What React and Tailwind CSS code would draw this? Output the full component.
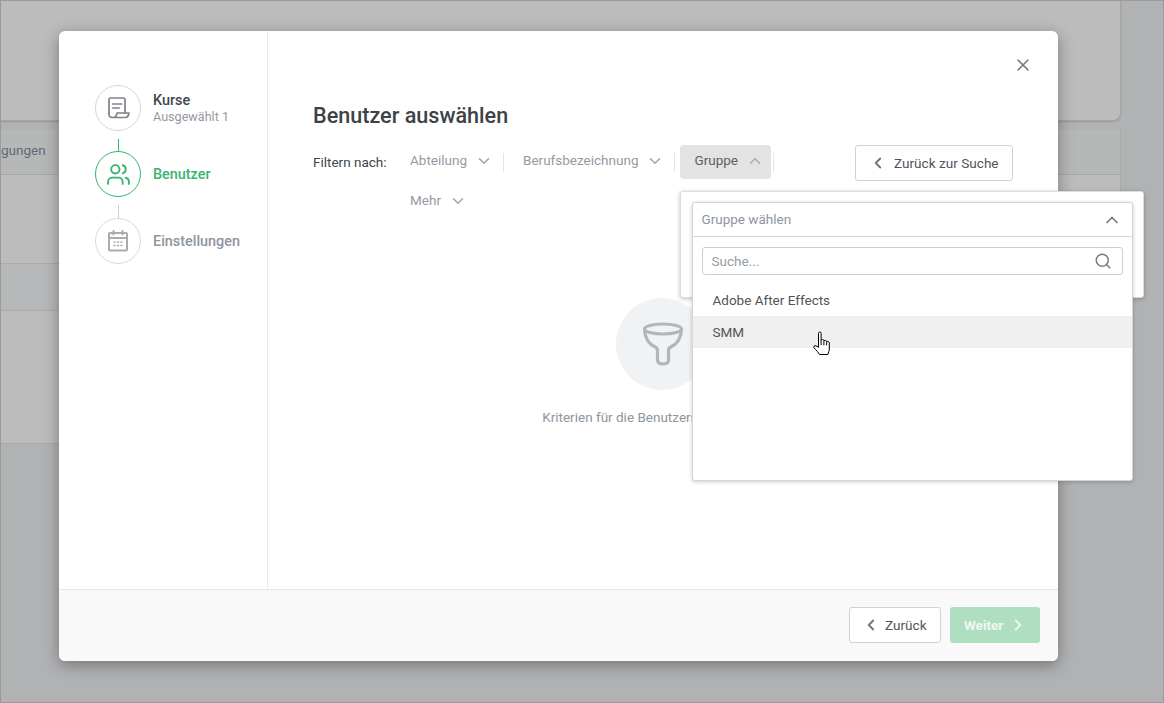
import { ChevronDown, ChevronLeft, ChevronRight, ChevronUp, Search, Users, X } from "lucide-react";

function ScrollIcon() {
  return (
    <svg width="24" height="24" viewBox="0 0 24 24" fill="none" stroke="#7f848b" strokeWidth="1.7" strokeLinejoin="round" strokeLinecap="round">
      <path d="M3 18V3.500A1.500 1.500 0 0 1 4.500 2H17.500A1.500 1.500 0 0 1 19 3.500V17" />
      <path d="M3 18c0 2 1 3.500 3.500 3.500h13c2 0 3-2 3.500-4.500H11c0 2-1.500 4.500-4 4.500" />
      <path d="M6.700 8h9M6.700 12h6.500" />
    </svg>
  );
}

function CalendarIcon() {
  return (
    <svg width="24" height="24" viewBox="0 0 24 24" fill="none" stroke="#a9acaf" strokeWidth="2" strokeLinecap="round">
      <rect x="3" y="4" width="18" height="17.5" rx="1" />
      <path d="M3 9h18M7.500 2v3.500M16.500 2v3.500" />
      <path d="M8 13h1M11.500 13h1M15 13h1M8 16.500h1M11.500 16.500h1M15 16.500h1" strokeWidth="1.600" />
    </svg>
  );
}

function FunnelIcon() {
  return (
    <svg width="42" height="46" viewBox="0 0 42 46" fill="none" stroke="#b3b6b9" strokeWidth="3.200" strokeLinejoin="round">
      <ellipse cx="21" cy="8" rx="18.500" ry="5" />
      <path d="M2.500 8c0 8 4 15 10 17.500 2 1 3 2 3 4V39c0 2.500 1.500 4 5.500 4s5.500-1.500 5.500-4V29.500c0-2 1-3 3-4 6-2.500 10-9.500 10-17.500" />
    </svg>
  );
}

function HandCursor() {
  return (
    <svg width="18" height="24" viewBox="0 0 18 24" fill="#fff" stroke="#000" strokeWidth="1" strokeLinejoin="round">
      <path d="M5.500 2.200c0-1.600 2.600-1.600 2.600 0V9.500c0-1.300 2.800-1.300 2.800 0v.800c0-1.300 2.700-1.300 2.700 0v1c0-1.200 2.700-1 2.700.5V18c0 2-.8 3.200-1.500 5.500H6.500C5.500 21.500 3.500 19.500 1.200 17c-1.200-1.300.2-3 1.800-2.200l2.500 1.500z" />
      <path d="M8.100 9.500v4.500M10.900 10.300v4M13.600 11.300v3" />
    </svg>
  );
}

function Step({ icon, title, sub, circle, titleClass }) {
  return (
    <div className="flex items-center gap-[12px]">
      <div className={`flex h-[46px] w-[46px] shrink-0 items-center justify-center rounded-full border bg-white ${circle}`}>
        {icon}
      </div>
      <div>
        <div className={`pt-px text-[14.4px] leading-[16px] font-medium ${titleClass}`}>{title}</div>
        {sub && <div className="text-[12.6px] leading-[15px] text-[#959aa2]">{sub}</div>}
      </div>
    </div>
  );
}

function Divider() {
  return <div className="mx-[2px] h-[19px] w-px bg-[#e4e4e4]" />;
}

function FilterItem({ label, open, children }) {
  return (
    <div className={`relative flex h-[34px] items-center gap-[8px] rounded pb-[2px] pl-[14px] ${open ? "bg-[#e3e3e3] pr-[7px] text-[#5a6068]" : "pr-[8px] text-[#959aa2]"}`}>
      <span className="text-[13.5px] leading-none">{label}</span>
      {open ? <ChevronUp size={18} color="#a9adb2" /> : <ChevronDown size={18} color="#a0a4aa" />}
      {children}
    </div>
  );
}

function GroupDropdown() {
  return (
    <div className="absolute left-0 top-[46px] z-10 h-[107px] w-[464px] rounded-[3px] border border-[#dcdcdc] bg-white pl-[11px] pt-[10px] shadow-[0_1px_4px_rgba(0,0,0,0.25)]">
      <div className="h-[279px] w-[441px] rounded-[3px] border border-[#d5d5d5] bg-white shadow-[0_1px_4px_rgba(0,0,0,0.2)]">
        <div className="flex h-[34px] items-center justify-between border-b border-[#d5d5d5] pl-[8px] pr-[10px]">
          <span className="text-[13.5px] text-[#8e959e]">Gruppe wählen</span>
          <ChevronUp size={20} color="#6f747a" />
        </div>
        <div className="px-[9px] pt-[10px]">
          <div className="flex h-[28px] items-center justify-between rounded-[3px] border border-[#cfcfcf] pl-[8px] pr-[10px]">
            <span className="text-[13.5px] text-[#979ca3]">Suche...</span>
            <Search size={18} color="#777b81" />
          </div>
        </div>
        <div className="pt-[9px] text-[13.5px] text-[#50555b]">
          <div className="flex h-[32px] items-center pl-[19px]">Adobe After Effects</div>
          <div className="relative flex h-[32px] items-center bg-[#f0f0f0] pl-[19px]">
            SMM
            <div className="absolute left-[120px] top-[15px]">
              <HandCursor />
            </div>
          </div>
        </div>
      </div>
    </div>
  );
}

export default function App() {
  return (
    <div className="relative h-[703px] w-[1164px] overflow-hidden border border-[#9a9a9a] bg-[#b1b2b4] [font-family:Roboto,sans-serif]">
      {/* page behind the overlay */}
      <div className="mr-[42px] flex flex-col gap-[9px]">
        <div className="h-[120px] rounded-br-lg border-r border-b border-[#a5a5a5] bg-[#bcbcbc] shadow-[0_1px_2px_rgba(0,0,0,0.15)]" />
        <div className="flex h-[314px] flex-col border-r border-b border-[#a8a9a9] bg-[#bbbcbb]">
          <div className="flex h-[45px] items-center border-b border-[#a5a6a7] bg-[#b6b8b8] pb-[3px] text-[13.5px] text-[#5e6a75]">gungen</div>
          <div className="h-[89px] border-b border-[#a9abae]" />
          <div className="h-[47px] border-b border-[#a9abae] bg-[#b7b8ba]" />
          <div className="flex-1" />
        </div>
      </div>

      {/* modal */}
      <div className="absolute left-[58px] top-[30px] flex h-[630px] w-[999px] flex-col rounded-md bg-white shadow-[0_4px_16px_rgba(0,0,0,0.35)]">
        <div className="relative flex flex-1">
          <aside className="w-[209px] shrink-0 border-r border-[#ececec] pl-[36px] pt-[54px]">
            <Step icon={<ScrollIcon />} title="Kurse" sub="Ausgewählt 1" circle="border-[#d6d6d6]" titleClass="text-[#41464d]" />
            <div className="ml-[23px] mt-[8px] h-[12px] w-px bg-[#35b46f]" />
            <Step icon={<Users size={25} color="#35b46f" strokeWidth={1.8} />} title="Benutzer" circle="border-[#35b46f]" titleClass="text-[#35b46f]" />
            <div className="ml-[23px] mt-[8px] h-[13px] w-px bg-[#cfcfcf]" />
            <Step icon={<CalendarIcon />} title="Einstellungen" circle="border-[#d9d9d9]" titleClass="text-[#8e959e]" />
          </aside>

          <main className="flex flex-1 flex-col px-[45px] pt-[72px]">
            <h1 className="text-[21.6px] leading-[26px] font-medium text-[#3e4246]">Benutzer auswählen</h1>
            <div className="mt-[16px] flex items-start">
              <div className="flex h-[34px] w-[83px] shrink-0 items-center text-[13.5px] text-[#41464d]">Filtern nach:</div>
              <div className="flex min-w-0 flex-1 flex-wrap items-center gap-y-[6px]">
                <FilterItem label="Abteilung" />
                <Divider />
                <div className="w-[3px]" />
                <FilterItem label="Berufsbezeichnung" />
                <Divider />
                <div className="w-[3px]" />
                <FilterItem label="Gruppe" open>
                  <GroupDropdown />
                </FilterItem>
                <Divider />
                <FilterItem label="Mehr" />
              </div>
              <button className="ml-[8px] flex h-[36px] w-[158px] shrink-0 items-center gap-[7px] rounded-[3px] border border-[#d2d2d2] bg-white pl-[13px] text-[13.6px] text-[#50555b]">
                <ChevronLeft size={18} color="#6f747a" strokeWidth={2.4} />
                Zurück zur Suche
              </button>
            </div>

            <div className="mt-[79px] flex flex-col items-center pr-[2px]">
              <div className="flex h-[92px] w-[92px] items-center justify-center rounded-full bg-[#f1f2f3] pl-[2px]">
                <FunnelIcon />
              </div>
              <p className="mt-[19px] text-[13.5px] leading-[16px] text-[#8e959e]">Kriterien für die Benutzersuche angeben</p>
            </div>
          </main>

          <button className="absolute right-[25px] top-[24px]">
            <X size={20} color="#73787e" strokeWidth={1.9} />
          </button>
        </div>

        <footer className="flex h-[72px] items-center justify-end gap-[9px] rounded-b-md border-t border-[#e6e6e6] bg-[#f9f9f9] pb-px pr-[18px]">
          <button className="flex h-[36px] w-[92px] items-center gap-[5px] rounded-[3px] border border-[#d2d2d2] bg-white pl-[12px] text-[13.6px] text-[#50555b]">
            <ChevronLeft size={18} color="#6f747a" strokeWidth={2.4} />
            Zurück
          </button>
          <button className="flex h-[36px] w-[90px] items-center gap-[6px] rounded-[3px] bg-[#b0dec0] pl-[14px] text-[13.5px] font-bold text-[#eef8f1]">
            Weiter
            <ChevronRight size={18} color="#eef8f1" strokeWidth={2.4} />
          </button>
        </footer>
      </div>
    </div>
  );
}
